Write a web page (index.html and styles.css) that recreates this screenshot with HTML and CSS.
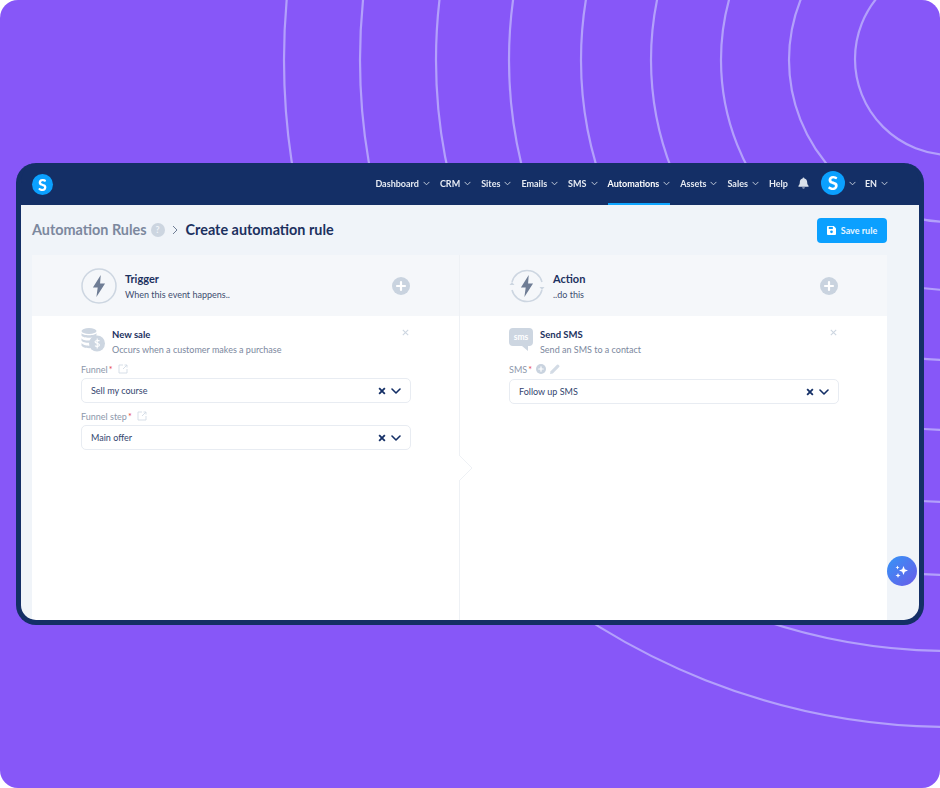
FILE: index.html
```html
<!DOCTYPE html>
<html lang="en">
<head>
    <meta charset="UTF-8">
    <meta name="viewport" content="width=device-width, initial-scale=1.0">
    <title>Create automation rule</title>
    <link rel="stylesheet" href="styles.css">
</head>
<body>
    <svg width="0" height="0" class="defs">
        <symbol id="chev" viewBox="0 0 8 5"><path d="M1 1l3 3 3-3" fill="none" stroke="currentColor" stroke-width="1.1" stroke-linecap="round" stroke-linejoin="round"/></symbol>
        <symbol id="chev-big" viewBox="0 0 10 6"><path d="M1 1l4 4 4-4" fill="none" stroke="#142f66" stroke-width="1.6" stroke-linecap="round" stroke-linejoin="round"/></symbol>
        <symbol id="clear" viewBox="0 0 7 7"><path d="M1 1l5 5M6 1L1 6" fill="none" stroke="#142f66" stroke-width="1.6"/></symbol>
        <symbol id="close" viewBox="0 0 7 7"><path d="M.8.8l5.4 5.4M6.2.8L.8 6.2" fill="none" stroke="#cdd6e1" stroke-width="1.1"/></symbol>
        <symbol id="plus" viewBox="0 0 18 18"><circle cx="9" cy="9" r="9" fill="#c9d3df"/><path d="M9 5v8M5 9h8" stroke="#fff" stroke-width="2.2" stroke-linecap="round"/></symbol>
        <symbol id="ext" viewBox="0 0 10 10"><path d="M5 1H1v8h8V5M5 5l4-4M6.5 1H9v2.5" fill="none" stroke="#d3dbe5" stroke-width=".9"/></symbol>
        <symbol id="bolt" viewBox="0 0 12 18" preserveAspectRatio="none"><path d="M7.6 0L.4 10.2h4.4L3.6 18l8-11H7z" fill="#6f7d95"/></symbol>
    </svg>

    <div class="page">
        <svg class="rings" viewBox="0 0 940 788" fill="none" stroke="#b3a0fb" stroke-width="2.2">
            <circle cx="951" cy="59" r="96"/>
            <circle cx="951" cy="60" r="162"/>
            <circle cx="951" cy="60" r="230"/>
            <circle cx="951" cy="60" r="300"/>
            <circle cx="951" cy="60" r="370"/>
            <circle cx="951" cy="60" r="442"/>
            <circle cx="951" cy="60" r="515"/>
            <circle cx="951" cy="60" r="591"/>
            <circle cx="951" cy="60" r="667"/>
        </svg>

        <div class="app">
            <div class="navbar">
                <div class="logo">S</div>
                <div class="nav-links">
                    <div class="nav-item">Dashboard <svg class="nav-chev"><use href="#chev"/></svg></div>
                    <div class="nav-item">CRM <svg class="nav-chev"><use href="#chev"/></svg></div>
                    <div class="nav-item">Sites <svg class="nav-chev"><use href="#chev"/></svg></div>
                    <div class="nav-item">Emails <svg class="nav-chev"><use href="#chev"/></svg></div>
                    <div class="nav-item">SMS <svg class="nav-chev"><use href="#chev"/></svg></div>
                    <div class="nav-item active">Automations <svg class="nav-chev"><use href="#chev"/></svg></div>
                    <div class="nav-item">Assets <svg class="nav-chev"><use href="#chev"/></svg></div>
                    <div class="nav-item">Sales <svg class="nav-chev"><use href="#chev"/></svg></div>
                    <div class="nav-item">Help</div>
                    <svg class="bell" viewBox="0 0 12 12"><path d="M6 0a1 1 0 0 1 1 1c2 .5 3 2 3 4 0 2 .5 3 1.5 4v1H.5V9C1.500 8 2 7 2 5c0-2 1-3.500 3-4a1 1 0 0 1 1-1zM4.500 10.800h3A1.500 1.200 0 0 1 4.500 10.800z" fill="#d9e0ea"/></svg>
                    <div class="avatar">S</div>
                    <svg class="nav-chev avatar-chev"><use href="#chev"/></svg>
                    <div class="nav-item lang">EN <svg class="nav-chev"><use href="#chev"/></svg></div>
                </div>
            </div>

            <div class="content">
                <div class="page-head">
                    <span class="crumb">Automation Rules</span>
                    <span class="help-badge">?</span>
                    <svg class="crumb-sep" viewBox="0 0 6 10"><path d="M1 1l4 4-4 4" fill="none" stroke="#6f7d95" stroke-width="1"/></svg>
                    <span class="crumb-current">Create automation rule</span>
                    <button class="save-button">
                        <svg viewBox="0 0 10 10"><path d="M0 1a1 1 0 0 1 1-1h6.500L10 2.500V9a1 1 0 0 1-1 1H1a1 1 0 0 1-1-1z" fill="#fff"/><rect x="2" y="1" width="4.500" height="2.300" fill="#0ba0ff"/><circle cx="5" cy="6.500" r="1.500" fill="#0ba0ff"/></svg>
                        Save rule
                    </button>
                </div>

                <div class="panel">
                    <div class="column">
                        <div class="column-head">
                            <svg class="step-icon" viewBox="0 0 36 36">
                                <circle cx="18" cy="18" r="17" fill="none" stroke="#cdd6e1" stroke-width="1.500"/>
                                <use href="#bolt" x="11.500" y="7" width="13" height="22"/>
                            </svg>
                            <div>
                                <div class="step-title">Trigger</div>
                                <div class="step-sub">When this event happens..</div>
                            </div>
                            <svg class="plus"><use href="#plus"/></svg>
                        </div>
                        <div class="column-body">
                            <div class="block-head">
                                <svg class="block-icon" viewBox="0 0 24 24">
                                    <ellipse cx="8" cy="3" rx="7.500" ry="3" fill="#cdd6e1"/>
                                    <path d="M.5 5c1 3 14 3 15 0v2.500c-1 3-14 3-15 0zM.5 10c1 3 9 3 10.500 2l-1 2.800C6 15 1 14.500.5 12.500zM.5 15c1 2 6 3 9 2.500l1 2.500C6 20.500 1 19.500.5 17.500z" fill="#cdd6e1"/>
                                    <circle cx="16" cy="15.500" r="8" fill="#cdd6e1"/>
                                    <path d="M18.500 13c-1-1-4.500-.8-4.500.8 0 2 4.500 1.200 4.500 3.200 0 1.600-3.500 1.800-4.500.7M16.200 10.500v10" fill="none" stroke="#fff" stroke-width="1.100"/>
                                </svg>
                                <div>
                                    <div class="block-title">New sale</div>
                                    <div class="block-sub">Occurs when a customer makes a purchase</div>
                                </div>
                                <svg class="close"><use href="#close"/></svg>
                            </div>
                            <label class="field-label">Funnel<span class="req">*</span><svg class="ext"><use href="#ext"/></svg></label>
                            <div class="select">
                                <span>Sell my course</span>
                                <svg class="clear"><use href="#clear"/></svg>
                                <svg class="caret"><use href="#chev-big"/></svg>
                            </div>
                            <label class="field-label">Funnel step<span class="req">*</span><svg class="ext"><use href="#ext"/></svg></label>
                            <div class="select">
                                <span>Main offer</span>
                                <svg class="clear"><use href="#clear"/></svg>
                                <svg class="caret"><use href="#chev-big"/></svg>
                            </div>
                        </div>
                    </div>

                    <div class="column column-right">
                        <svg class="notch" viewBox="0 0 15 28"><path d="M0 0l13 13L0 26" fill="#fff" stroke="#eef1f5"/></svg>
                        <div class="column-head">
                            <svg class="step-icon" viewBox="0 0 36 36">
                                <path d="M3 14A15.500 15.500 0 0 1 33 14M33 22A15.500 15.500 0 0 1 3 22" fill="none" stroke="#cdd6e1" stroke-width="1.500"/>
                                <path d="M.5 17h5L3 14zM30.500 19h5L33 22z" fill="#cdd6e1"/>
                                <use href="#bolt" x="11.500" y="7" width="13" height="22"/>
                            </svg>
                            <div>
                                <div class="step-title">Action</div>
                                <div class="step-sub">..do this</div>
                            </div>
                            <svg class="plus"><use href="#plus"/></svg>
                        </div>
                        <div class="column-body">
                            <div class="block-head">
                                <svg class="block-icon" viewBox="0 0 24 24">
                                    <path d="M4 0h16a4 4 0 0 1 4 4v10a4 4 0 0 1-4 4h-1v5l-6-5H4a4 4 0 0 1-4-4V4a4 4 0 0 1 4-4z" fill="#cdd6e1"/>
                                    <text x="12" y="12" text-anchor="middle" class="sms-text">sms</text>
                                </svg>
                                <div>
                                    <div class="block-title">Send SMS</div>
                                    <div class="block-sub">Send an SMS to a contact</div>
                                </div>
                                <svg class="close"><use href="#close"/></svg>
                            </div>
                            <label class="field-label sms-label">SMS<span class="req">*</span>
                                <svg class="mini-plus"><use href="#plus"/></svg>
                                <svg class="pencil" viewBox="0 0 10 10"><path d="M0 10l.6-2.800L7 .8a1 1 0 0 1 1.400 0l.8.8a1 1 0 0 1 0 1.400L2.800 9.400z" fill="#d3dbe5"/></svg>
                            </label>
                            <div class="select">
                                <span>Follow up SMS</span>
                                <svg class="clear"><use href="#clear"/></svg>
                                <svg class="caret"><use href="#chev-big"/></svg>
                            </div>
                        </div>
                    </div>
                </div>
            </div>

            <button class="fab">
                <svg viewBox="0 0 16 16"><path d="M9.500 3l1.300 3.200L14 7.500l-3.200 1.300L9.500 12 8.200 8.800 5 7.500l3.200-1.300zM3.500 2.500l.6 1.400 1.400.6-1.400.6-.6 1.400-.6-1.400-1.400-.6 1.400-.6zM4 10l.7 1.800 1.800.7-1.800.7L4 15l-.7-1.800-1.800-.7 1.800-.7z" fill="#fff"/></svg>
            </button>
        </div>
    </div>
</body>
</html>
```

FILE: styles.css
```css
body {
    font-family: Lato, "Open Sans", Arial, sans-serif;
    margin: 0;
    padding: 0;
    background-color: #fff;
    overflow: hidden;
}
.defs {
    display: block;
    height: 0;
}
.page {
    position: relative;
    width: 940px;
    height: 788px;
    padding: 163px 16px 0;
    box-sizing: border-box;
    background: #8757f8;
    border-radius: 18px;
    overflow: hidden;
}
.rings {
    position: absolute;
    left: 0;
    top: 0;
    width: 940px;
    height: 788px;
    filter: blur(.4px);
}
.app {
    position: relative;
    height: 462px;
    background-color: #142f66;
    border: solid #142f66;
    border-width: 0 5px 5px;
    border-radius: 20px;
    box-sizing: border-box;
    display: flex;
    flex-direction: column;
    overflow: hidden;
    filter: blur(.3px);
}
.navbar {
    height: 42px;
    flex-shrink: 0;
    display: flex;
    align-items: center;
    justify-content: space-between;
    padding: 0 31px 0 11px;
    color: #e6ebf3;
}
.logo {
    width: 21px;
    height: 21px;
    border-radius: 50%;
    background-color: #0ba0ff;
    color: #fff;
    font-size: 16px;
    font-weight: 900;
    line-height: 21px;
    text-align: center;
}
.nav-links {
    display: flex;
    align-items: center;
    height: 100%;
}
.nav-item {
    height: 100%;
    display: flex;
    align-items: center;
    gap: 4px;
    margin-right: 10px;
    padding-bottom: 2px;
    font-size: 9px;
    font-weight: 700;
    white-space: nowrap;
    box-sizing: border-box;
}
.nav-item.active {
    color: #fff;
    border-bottom: 2px solid #0ea5ff;
    padding-bottom: 0;
}
.nav-item.lang {
    margin: 0 0 0 9px;
}
.nav-chev {
    width: 7px;
    height: 5px;
    color: #c3cddb;
}
.bell {
    width: 11px;
    height: 12px;
    margin: 0 12px 2px 0;
}
.avatar {
    width: 24px;
    height: 24px;
    margin-bottom: 2px;
    border-radius: 50%;
    background-color: #0ba0ff;
    color: #fff;
    font-size: 19px;
    font-weight: 900;
    line-height: 24px;
    text-align: center;
}
.avatar-chev {
    margin: 0 0 2px 4px;
}
.content {
    flex-grow: 1;
    min-height: 0;
    background-color: #f0f4f9;
    padding: 0 32px 0 11px;
    display: flex;
    flex-direction: column;
}
.page-head {
    height: 50px;
    flex-shrink: 0;
    display: flex;
    align-items: center;
}
.crumb {
    font-size: 14.4px;
    font-weight: 700;
    color: #7c889e;
    margin-bottom: 2px;
}
.help-badge {
    width: 14px;
    height: 14px;
    margin-left: 4px;
    border-radius: 50%;
    background-color: #ccd5e0;
    color: #f0f4f9;
    font-size: 9px;
    font-weight: 700;
    line-height: 14px;
    text-align: center;
}
.crumb-sep {
    width: 6px;
    height: 10px;
    margin: 0 8px 0 7px;
}
.crumb-current {
    font-size: 14.4px;
    font-weight: 700;
    color: #1c315f;
    margin-bottom: 2px;
}
.save-button {
    margin-left: auto;
    width: 70px;
    height: 25px;
    border: none;
    border-radius: 4px;
    background-color: #0ba0ff;
    color: #e8f5ff;
    font-family: inherit;
    font-size: 9px;
    font-weight: 700;
    display: flex;
    align-items: center;
    justify-content: center;
    gap: 5px;
    padding: 0;
}
.save-button svg {
    width: 9px;
    height: 9px;
}
.panel {
    flex-grow: 1;
    display: flex;
    background-color: #fff;
}
.column {
    position: relative;
    flex: 1;
    display: flex;
    flex-direction: column;
}
.column-right {
    border-left: 1px solid #eef1f5;
}
.notch {
    position: absolute;
    left: -1px;
    top: 200px;
    width: 15px;
    height: 28px;
}
.column-head {
    height: 61px;
    flex-shrink: 0;
    background-color: #f5f7fa;
    padding: 0 49px;
    display: flex;
    align-items: center;
    gap: 8px;
}
.step-icon {
    width: 36px;
    height: 36px;
}
.step-title {
    font-size: 11px;
    font-weight: 700;
    color: #1c315f;
    margin: 0 0 4px;
}
.step-sub {
    font-size: 9px;
    color: #3d4d70;
}
.plus {
    width: 18px;
    height: 18px;
    margin-left: auto;
}
.column-body {
    padding: 12px 48px 0 49px;
}
.block-head {
    position: relative;
    display: flex;
    gap: 7px;
    height: 35px;
}
.block-icon {
    width: 24px;
    height: 24px;
    flex-shrink: 0;
}
.block-title {
    font-size: 9.5px;
    font-weight: 700;
    color: #1c315f;
    margin: 1px 0 4px;
}
.block-sub {
    font-size: 9px;
    color: #7c889e;
}
.close {
    position: absolute;
    right: 2px;
    top: 1px;
    width: 7px;
    height: 7px;
}
.sms-text {
    fill: #fff;
    font-size: 8.500px;
    font-weight: 700;
}
.field-label {
    display: flex;
    align-items: center;
    height: 12px;
    margin-bottom: 3px;
    font-size: 9px;
    color: #8d98ab;
}
.req {
    color: #e5484d;
    margin-left: 1px;
}
.ext {
    width: 10px;
    height: 10px;
    margin-left: 5px;
}
.sms-label {
    margin-bottom: 4px;
}
.mini-plus {
    width: 10px;
    height: 10px;
    margin-left: 4px;
}
.pencil {
    width: 10px;
    height: 10px;
    margin-left: 4px;
}
.select {
    height: 25px;
    box-sizing: border-box;
    border: 1px solid #e8ecf2;
    border-radius: 5px;
    padding: 0 9px;
    margin-bottom: 7px;
    display: flex;
    align-items: center;
    font-size: 9px;
    color: #33466f;
}
.select span {
    flex-grow: 1;
}
.clear {
    width: 8px;
    height: 8px;
}
.caret {
    width: 10px;
    height: 6px;
    margin-left: 5px;
}
.fab {
    position: absolute;
    right: 2px;
    top: 393px;
    width: 30px;
    height: 30px;
    border: none;
    border-radius: 50%;
    padding: 7px;
    background: linear-gradient(135deg, #3595f7, #6a5ae8);
}
.fab svg {
    display: block;
    width: 16px;
    height: 16px;
}
```
